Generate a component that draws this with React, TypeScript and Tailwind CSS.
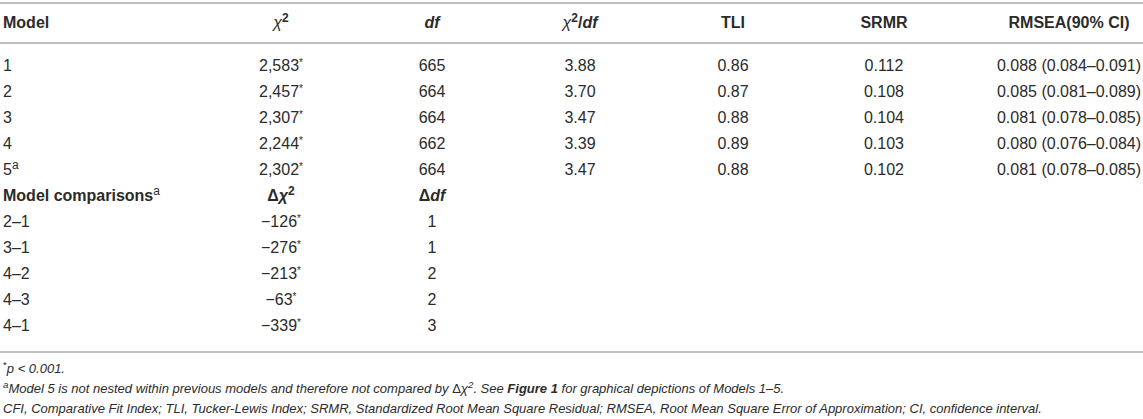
import React from "react";

const cols = "grid grid-cols-[201px_160px_142px_154px_152px_150px_1fr] items-center";

const fits = [
  { m: "1", chi: "2,583", df: "665", ratio: "3.88", tli: "0.86", srmr: "0.112", rmsea: "0.088 (0.084–0.091)" },
  { m: "2", chi: "2,457", df: "664", ratio: "3.70", tli: "0.87", srmr: "0.108", rmsea: "0.085 (0.081–0.089)" },
  { m: "3", chi: "2,307", df: "664", ratio: "3.47", tli: "0.88", srmr: "0.104", rmsea: "0.081 (0.078–0.085)" },
  { m: "4", chi: "2,244", df: "662", ratio: "3.39", tli: "0.89", srmr: "0.103", rmsea: "0.080 (0.076–0.084)" },
  { m: "5", sup: true, chi: "2,302", df: "664", ratio: "3.47", tli: "0.88", srmr: "0.102", rmsea: "0.081 (0.078–0.085)" },
];

const comparisons = [
  { m: "2–1", chi: "−126", df: "1" },
  { m: "3–1", chi: "−276", df: "1" },
  { m: "4–2", chi: "−213", df: "2" },
  { m: "4–3", chi: "−63", df: "2" },
  { m: "4–1", chi: "−339", df: "3" },
];

function Star() {
  return <sup className="text-[10px]">*</sup>;
}

export default function App() {
  return (
    <div
      className="w-[1143px] h-[419px] overflow-hidden bg-white text-[16px] text-[#2b2b2b]"
      style={{ fontFamily: '"Liberation Sans", Arial, sans-serif' }}
    >
      <div className="mt-[2px] border-t-2 border-[#bdbdbd]">
        {/* header */}
        <div className={`${cols} h-[38px] font-bold leading-[26px]`}>
          <div className="pl-[3px]">Model</div>
          <div className="text-center">
            <span className="italic font-normal">χ</span>
            <sup className="font-bold">2</sup>
          </div>
          <div className="text-center italic">df</div>
          <div className="text-center">
            <span className="italic font-normal">χ</span>
            <sup className="font-bold">2</sup>/<span className="italic">df</span>
          </div>
          <div className="text-center">TLI</div>
          <div className="text-center">SRMR</div>
          <div className="justify-self-end w-[148px] text-center whitespace-nowrap">RMSEA(90% CI)</div>
        </div>

        <div className="border-t-2 border-[#bdbdbd] pt-[9px] pb-[12px]">
          {fits.map((r) => (
            <div key={r.m} className={`${cols} h-[26px] leading-[26px]`}>
              <div className="pl-[3px]">
                {r.m}
                {r.sup ? <sup>a</sup> : null}
              </div>
              <div className="text-center">
                {r.chi}
                <Star />
              </div>
              <div className="text-center">{r.df}</div>
              <div className="text-center">{r.ratio}</div>
              <div className="text-center">{r.tli}</div>
              <div className="text-center">{r.srmr}</div>
              <div className="justify-self-end w-[148px] text-center whitespace-nowrap">{r.rmsea}</div>
            </div>
          ))}

          <div className={`${cols} h-[26px] leading-[26px] font-bold`}>
            <div className="pl-[3px] whitespace-nowrap">
              Model comparisons<sup className="font-normal">a</sup>
            </div>
            <div className="text-center">
              Δ<span className="italic">χ</span>
              <sup>2</sup>
            </div>
            <div className="text-center">
              Δ<span className="italic">df</span>
            </div>
          </div>

          {comparisons.map((r) => (
            <div key={r.m} className={`${cols} h-[26px] leading-[26px]`}>
              <div className="pl-[3px]">{r.m}</div>
              <div className="text-center">
                {r.chi}
                <Star />
              </div>
              <div className="text-center">{r.df}</div>
            </div>
          ))}
        </div>

        {/* notes */}
        <div className="border-t-2 border-[#bdbdbd] pt-[6px] pl-[3px] italic text-[13px] leading-[20px]">
          <p>
            <sup className="not-italic">*</sup>p &lt; 0.001.
          </p>
          <p>
            <sup>a</sup>Model 5 is not nested within previous models and therefore not compared by{" "}
            <span className="not-italic">Δ</span>χ<sup>2</sup>. See <span className="font-bold">Figure 1</span> for
            graphical depictions of Models 1–5.
          </p>
          <p className="whitespace-nowrap">
            CFI, Comparative Fit Index; TLI, Tucker-Lewis Index; SRMR, Standardized Root Mean Square Residual; RMSEA,
            Root Mean Square Error of Approximation; CI, confidence interval.
          </p>
        </div>
      </div>
    </div>
  );
}
